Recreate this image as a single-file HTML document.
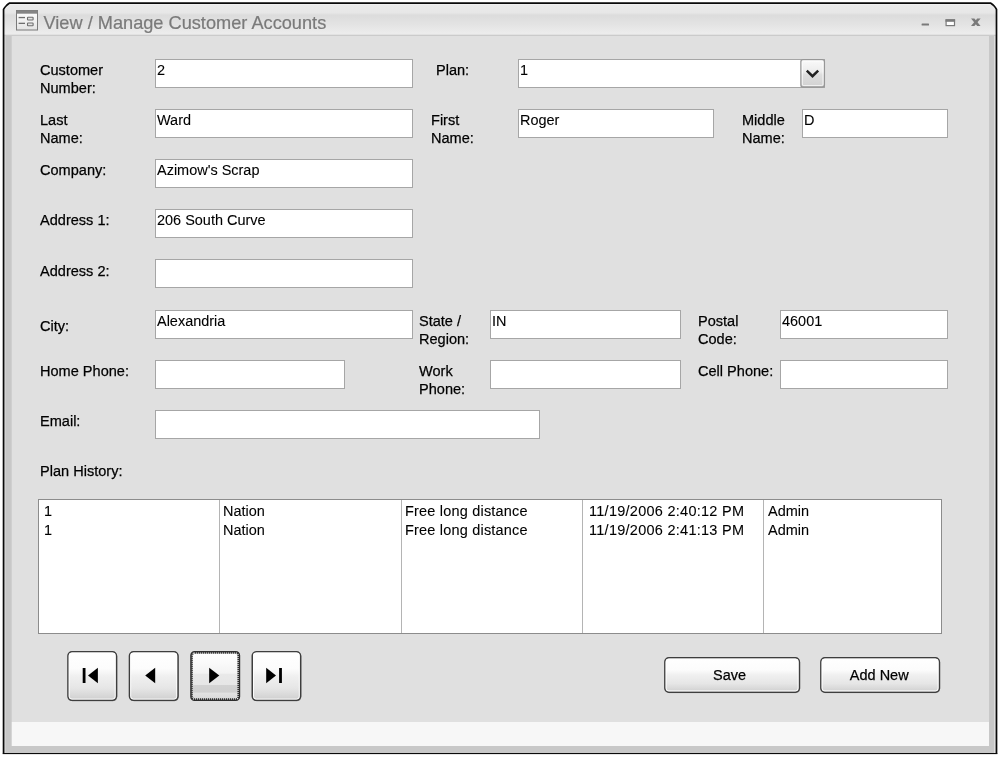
<!DOCTYPE html>
<html>
<head>
<meta charset="utf-8">
<title>View / Manage Customer Accounts</title>
<style>
*{box-sizing:border-box;margin:0;padding:0}
html,body{width:1000px;height:757px;overflow:hidden;background:#fff}
html{filter:grayscale(1)}
body{font-family:"Liberation Sans","DejaVu Sans",sans-serif;font-size:15.4px;color:#000;position:relative;-webkit-text-stroke:0.25px #000}
.t{position:absolute;left:43.5px;top:13px;font-size:18.2px;color:#7a7a7a;-webkit-text-stroke:0.2px #7a7a7a;white-space:nowrap;line-height:20px}
.l{position:absolute;line-height:18px;white-space:nowrap;transform:scaleX(.945);transform-origin:0 0}
.s{display:inline-block;transform:scaleX(.94);transform-origin:0 0}
.i{position:absolute;height:29px;background:#fff;border:1px solid #a6a6a6;line-height:18px;padding:1px 0 0 .6px;-webkit-text-stroke:0.1px #000;white-space:nowrap;overflow:hidden}
.list{position:absolute;left:38px;top:499px;width:904px;height:135px;background:#fff;border:1px solid #8c8c8c}
.col{position:absolute;top:0;height:133px;border-left:1px solid #b4b4b4;line-height:19.2px;padding:1px 0 0 3px;white-space:nowrap;-webkit-text-stroke:0.1px #000}
.tbt{position:absolute;top:657px;height:36px;text-align:center;line-height:35px}
svg{position:absolute;left:0;top:0}
</style>
</head>
<body>
<svg width="1000" height="757" viewBox="0 0 1000 757">
<defs>
<linearGradient id="gt" gradientUnits="userSpaceOnUse" x1="0" y1="4" x2="0" y2="35"><stop offset="0" stop-color="#f3f3f3"/><stop offset=".04" stop-color="#eaeaea"/><stop offset=".28" stop-color="#e7e7e7"/><stop offset=".36" stop-color="#dcdcdc"/><stop offset=".65" stop-color="#e3e3e3"/><stop offset=".93" stop-color="#ececec"/><stop offset="1" stop-color="#ececec"/></linearGradient>
<linearGradient id="gi" x1="0" y1="0" x2="0" y2="1"><stop offset="0" stop-color="#fff"/><stop offset="1" stop-color="#e4e4e4"/></linearGradient>
<clipPath id="cw"><path d="M3.5 754 V9.2 L9 3.2 H991 L996.5 9.2 V754 Z"/></clipPath>
</defs>
<g clip-path="url(#cw)">
<rect x="0" y="0" width="1000" height="757" fill="#c8c8c8"/>
<rect x="0" y="0" width="1000" height="35" fill="url(#gt)"/>
<rect x="0" y="34.7" width="1000" height="1.4" fill="#cbcbcb"/>
<rect x="11.7" y="36" width="977.3" height="686" fill="#e0e0e0"/>
<rect x="11.7" y="722" width="977.3" height="24" fill="#f7f7f7"/>
<rect x="994" y="36" width="1.6" height="717" fill="#dedede"/>
<rect x="4.4" y="36" width="1.2" height="717" fill="#dadada"/>
</g>
<path d="M3.55 753.5 V9.4 Q4.5 7.5 6 6 Q7.5 4.3 9.3 3.2 H990.8 Q992.6 4.3 994.2 6 Q995.6 7.5 996.5 9.4 V753.5" fill="none" stroke="#0a0a0a" stroke-width="1.7"/>
<rect x="2.7" y="753" width="994.7" height="1.1" fill="#0a0a0a"/>
<g>
<rect x="16.5" y="10.5" width="21" height="19.5" fill="url(#gi)" stroke="#7b7b7b"/>
<rect x="16.5" y="10.3" width="21" height="3.4" fill="#858585"/>
<rect x="18.6" y="16.9" width="6.4" height="1.3" fill="#6e6e6e"/>
<rect x="18.6" y="22.7" width="6.4" height="1.3" fill="#6e6e6e"/>
<rect x="27.5" y="17.2" width="5.6" height="2.8" rx=".6" fill="#e4e4e4" stroke="#6e6e6e" stroke-width="1.1"/>
<rect x="27.5" y="23" width="5.6" height="2.8" rx=".6" fill="#e4e4e4" stroke="#6e6e6e" stroke-width="1.1"/>
</g>
<g>
<rect x="921.6" y="23.6" width="7.4" height="2" rx=".5" fill="#7a7a7a"/>
<rect x="946.1" y="20" width="8.4" height="5.6" fill="#fff" stroke="#7a7a7a" stroke-width="1.2"/>
<rect x="945.5" y="19.2" width="9.6" height="2.6" fill="#7a7a7a"/>
<path d="M971 18.4 h3.4 L980.6 26 h-3.4 Z" fill="#7a7a7a"/><path d="M980.6 18.4 h-3.4 L971 26 h3.4 Z" fill="#7a7a7a"/>
</g>
</svg>
<div class="t">View / Manage Customer Accounts</div>

<div class="l" style="left:40px;top:61px">Customer<br>Number:</div>
<div class="i" style="left:155px;top:59px;width:258px"><span class="s">2</span></div>
<div class="l" style="left:436px;top:61px">Plan:</div>
<div class="i" style="left:518px;top:59px;width:307px"><span class="s">1</span></div>
<svg width="1000" height="757" viewBox="0 0 1000 757"><defs><linearGradient id="gd" x1="0" y1="0" x2="0" y2="1"><stop offset="0" stop-color="#fafafa"/><stop offset=".45" stop-color="#ececec"/><stop offset=".55" stop-color="#dedede"/><stop offset="1" stop-color="#d2d2d2"/></linearGradient></defs><rect x="800.9" y="59.6" width="23.5" height="27.4" rx="2" fill="url(#gd)" stroke="#979797" stroke-width="1.3"/><rect x="802.3" y="61" width="20.7" height="24.6" rx="1.5" fill="none" stroke="#fff" stroke-width="1" opacity=".75"/><path d="M806.8 70.6 L812.5 76.2 L818.2 70.6" stroke="#222" stroke-width="2.5" fill="none"/></svg>

<div class="l" style="left:40px;top:111px">Last<br>Name:</div>
<div class="i" style="left:155px;top:109px;width:258px"><span class="s">Ward</span></div>
<div class="l" style="left:431px;top:111px">First<br>Name:</div>
<div class="i" style="left:518px;top:109px;width:196px"><span class="s">Roger</span></div>
<div class="l" style="left:742px;top:111px">Middle<br>Name:</div>
<div class="i" style="left:802px;top:109px;width:146px"><span class="s">D</span></div>

<div class="l" style="left:40px;top:161px">Company:</div>
<div class="i" style="left:155px;top:159px;width:258px"><span class="s">Azimow's Scrap</span></div>

<div class="l" style="left:40px;top:211px">Address 1:</div>
<div class="i" style="left:155px;top:209px;width:258px"><span class="s">206 South Curve</span></div>

<div class="l" style="left:40px;top:262px">Address 2:</div>
<div class="i" style="left:155px;top:259px;width:258px"></div>

<div class="l" style="left:40px;top:317px">City:</div>
<div class="i" style="left:155px;top:310px;width:258px"><span class="s">Alexandria</span></div>
<div class="l" style="left:419px;top:312px">State /<br>Region:</div>
<div class="i" style="left:490px;top:310px;width:191px"><span class="s">IN</span></div>
<div class="l" style="left:698px;top:312px">Postal<br>Code:</div>
<div class="i" style="left:780px;top:310px;width:168px"><span class="s">46001</span></div>

<div class="l" style="left:40px;top:362px">Home Phone:</div>
<div class="i" style="left:155px;top:360px;width:190px"></div>
<div class="l" style="left:419px;top:362px">Work<br>Phone:</div>
<div class="i" style="left:490px;top:360px;width:191px"></div>
<div class="l" style="left:698px;top:362px">Cell Phone:</div>
<div class="i" style="left:780px;top:360px;width:168px"></div>

<div class="l" style="left:40px;top:412px">Email:</div>
<div class="i" style="left:155px;top:410px;width:385px"></div>

<div class="l" style="left:40px;top:462px">Plan History:</div>

<div class="list">
 <div class="col" style="left:0;border-left:0;width:181px;padding-left:5px"><span class="s">1<br>1</span></div>
 <div class="col" style="left:180px;width:182px"><span class="s">Nation<br>Nation</span></div>
 <div class="col" style="left:362px;width:181px;letter-spacing:.22px"><span class="s">Free long distance<br>Free long distance</span></div>
 <div class="col" style="left:543px;width:181px;padding-left:5.5px;letter-spacing:.3px"><span class="s">11/19/2006 2:40:12 PM<br>11/19/2006 2:41:13 PM</span></div>
 <div class="col" style="left:724px;width:178px;padding-left:4px"><span class="s">Admin<br>Admin</span></div>
</div>

<svg width="1000" height="757" viewBox="0 0 1000 757" style="pointer-events:none">
<defs>
<linearGradient id="gb" x1="0" y1="0" x2="0" y2="1"><stop offset="0" stop-color="#fff"/><stop offset=".35" stop-color="#fcfcfc"/><stop offset=".5" stop-color="#f0f0f0"/><stop offset=".75" stop-color="#e6e6e6"/><stop offset=".92" stop-color="#d6d6d6"/><stop offset="1" stop-color="#cdcdcd"/></linearGradient>
<linearGradient id="gf" x1="0" y1="0" x2="0" y2="1"><stop offset="0" stop-color="#fff"/><stop offset=".18" stop-color="#fbfbfb"/><stop offset=".44" stop-color="#f3f3f3"/><stop offset=".46" stop-color="#e9e9e9"/><stop offset=".68" stop-color="#e6e6e6"/><stop offset=".70" stop-color="#d2d2d2"/><stop offset=".84" stop-color="#d0d0d0"/><stop offset=".86" stop-color="#e2e2e2"/><stop offset="1" stop-color="#d8d8d8"/></linearGradient>
</defs>
<rect x="68.50" y="652.30" width="48.40" height="48.50" rx="4" fill="none" stroke="#555" stroke-width="1" opacity=".55"/><rect x="67.95" y="651.75" width="48.50" height="48.60" rx="4" fill="url(#gb)" stroke="#3e3e3e" stroke-width="1.5"/><rect x="69.20" y="653.00" width="46.00" height="46.10" rx="2.8" fill="none" stroke="#fff" stroke-width="1" opacity=".9"/>
<rect x="130.00" y="652.30" width="48.40" height="48.50" rx="4" fill="none" stroke="#555" stroke-width="1" opacity=".55"/><rect x="129.45" y="651.75" width="48.50" height="48.60" rx="4" fill="url(#gb)" stroke="#3e3e3e" stroke-width="1.5"/><rect x="130.70" y="653.00" width="46.00" height="46.10" rx="2.8" fill="none" stroke="#fff" stroke-width="1" opacity=".9"/>
<rect x="191.60" y="652.40" width="47.20" height="47.30" rx="3" fill="url(#gf)" stroke="#2e2e2e" stroke-width="2.8"/><rect x="192.40" y="653.20" width="45.60" height="45.70" rx="1.5" fill="none" stroke="#fff" stroke-width="1.3" stroke-dasharray="1 1" opacity=".9"/>
<rect x="252.80" y="652.30" width="48.20" height="48.50" rx="4" fill="none" stroke="#555" stroke-width="1" opacity=".55"/><rect x="252.25" y="651.75" width="48.30" height="48.60" rx="4" fill="url(#gb)" stroke="#3e3e3e" stroke-width="1.5"/><rect x="253.50" y="653.00" width="45.80" height="46.10" rx="2.8" fill="none" stroke="#fff" stroke-width="1" opacity=".9"/>
<rect x="665.40" y="658.40" width="134.40" height="34.20" rx="4" fill="none" stroke="#555" stroke-width="1" opacity=".55"/><rect x="664.85" y="657.85" width="134.50" height="34.30" rx="4" fill="url(#gb)" stroke="#3e3e3e" stroke-width="1.5"/><rect x="666.10" y="659.10" width="132.00" height="31.80" rx="2.8" fill="none" stroke="#fff" stroke-width="1" opacity=".9"/>
<rect x="821.40" y="658.40" width="118.40" height="34.20" rx="4" fill="none" stroke="#555" stroke-width="1" opacity=".55"/><rect x="820.85" y="657.85" width="118.50" height="34.30" rx="4" fill="url(#gb)" stroke="#3e3e3e" stroke-width="1.5"/><rect x="822.10" y="659.10" width="116.00" height="31.80" rx="2.8" fill="none" stroke="#fff" stroke-width="1" opacity=".9"/>
<g fill="#000">
<rect x="82.7" y="668" width="2.8" height="15"/><path d="M88 675.5 L97.9 667.8 V683.2 Z"/>
<path d="M145.2 675.5 L155.2 667.8 V683.2 Z"/>
<path d="M219.3 675.5 L209.2 667.8 V683.2 Z"/>
<path d="M276 675.5 L266.2 667.8 V683.2 Z"/><rect x="279.1" y="668" width="2.8" height="15"/>
</g>
</svg>
<div class="tbt" style="left:664px;width:131px"><span class="s" style="transform-origin:50% 0">Save</span></div>
<div class="tbt" style="left:820px;width:118px"><span class="s" style="transform-origin:50% 0">Add New</span></div>
</body>
</html>
